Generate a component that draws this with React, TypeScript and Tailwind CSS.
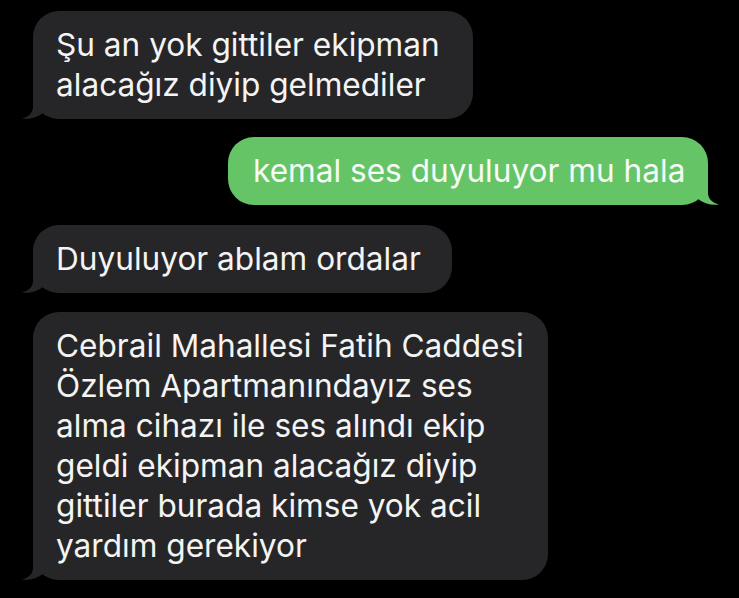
import React from "react";

const DARK = "#262628";
const GREEN = "#65c466";

function TailLeft() {
  return (
    <svg
      className="absolute left-[-11px] bottom-[-2px]"
      width="24"
      height="30"
      viewBox="0 0 24 30"
    >
      <path
        d="M11 0 L11 16 C11 22 6 26 0 27.5 C8 28.5 15 26.5 21 22 L21 0 Z"
        fill={DARK}
      />
    </svg>
  );
}

function TailRight() {
  return (
    <svg
      className="absolute right-[-11px] bottom-[-2px]"
      width="24"
      height="30"
      viewBox="0 0 24 30"
    >
      <path
        d="M13 0 L13 16 C13 22 18 26 24 27.5 C16 28.5 9 26.5 3 22 L3 0 Z"
        fill={GREEN}
      />
    </svg>
  );
}

function Received({ lines, width }: { lines: string[]; width: string }) {
  return (
    <div
      className={`relative self-start ml-[33px] rounded-[26px] bg-[#262628] pl-[23px] py-[14px] text-[31.6px] leading-[40px] text-[#f4f4f4] ${width}`}
    >
      {lines.map((l, i) => (
        <div key={i} className="whitespace-nowrap">
          {l}
        </div>
      ))}
      <TailLeft />
    </div>
  );
}

export default function App() {
  return (
    <div
      className="w-[739px] h-[598px] bg-black overflow-hidden flex flex-col pt-[11px]"
      style={{ fontFamily: "Inter, 'Noto Sans', sans-serif" }}
    >
      <Received
        width="w-[440px]"
        lines={["Şu an yok gittiler ekipman", "alacağız diyip gelmediler"]}
      />
      <div className="relative self-end mr-[31px] mt-[18px] w-[480px] rounded-[26px] bg-[#65c466] pl-[25px] py-[14px] text-[31.6px] leading-[40px] text-[#f6fbf6] whitespace-nowrap">
        kemal ses duyuluyor mu hala
        <TailRight />
      </div>
      <div className="mt-[20px] flex flex-col">
        <Received width="w-[419px]" lines={["Duyuluyor ablam ordalar"]} />
      </div>
      <div className="mt-[19px] flex flex-col">
        <Received
          width="w-[515px]"
          lines={[
            "Cebrail Mahallesi Fatih Caddesi",
            "Özlem Apartmanındayız ses",
            "alma cihazı ile ses alındı ekip",
            "geldi ekipman alacağız diyip",
            "gittiler burada kimse yok acil",
            "yardım gerekiyor",
          ]}
        />
      </div>
    </div>
  );
}
